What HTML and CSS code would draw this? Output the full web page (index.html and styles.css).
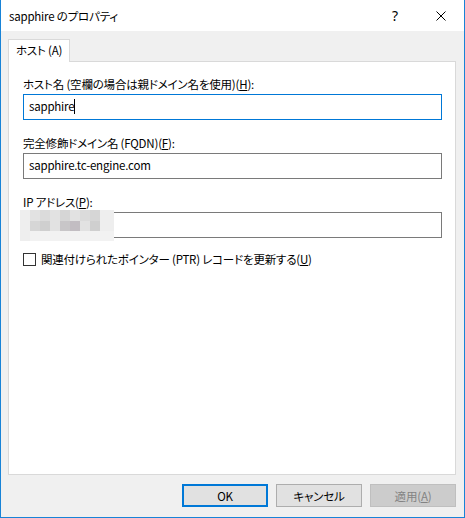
FILE: index.html
```html
<!DOCTYPE html>
<html lang="ja">
<head>
    <meta charset="UTF-8">
    <title>sapphire のプロパティ</title>
    <link rel="stylesheet" href="styles.css">
</head>
<body>
    <div class="window">
        <div class="titlebar">
            <span class="title">sapphire のプロパティ</span>
            <span class="caption-btn help">?</span>
            <span class="caption-btn close">
                <svg width="10" height="10" viewBox="0 0 10 10"><path d="M0.5 0.5 L9.5 9.5 M9.5 0.5 L0.5 9.5" stroke="#000" stroke-width="1" fill="none"/></svg>
            </span>
        </div>

        <div class="client">
            <div class="tabs">
                <div class="tab">ホスト (A)</div>
            </div>
            <div class="panel">
                <div class="field">
                    <label>ホスト名 (空欄の場合は親ドメイン名を使用)(<u>H</u>):</label>
                    <div class="textbox focused">sapphire<span class="caret"></span></div>
                </div>
                <div class="field">
                    <label>完全修飾ドメイン名 (FQDN)(<u>F</u>):</label>
                    <div class="textbox">sapphire.tc-engine.com</div>
                </div>
                <div class="field">
                    <label>IP アドレス(<u>P</u>):</label>
                    <div class="textbox ip">
                        <!-- masked address -->
                        <div class="mosaic">
                            <i class="c1"></i><i class="c2"></i><i class="c3"></i><i class="c2"></i><i class="c4"></i><i class="c2"></i><i class="c3"></i><i class="c4"></i><i class="c1"></i><i class="c1"></i>
                            <i class="c1"></i><i class="c4"></i><i class="c5"></i><i class="c2"></i><i class="c6"></i><i class="c7"></i><i class="c2"></i><i class="c5"></i><i class="c1"></i><i class="c1"></i>
                            <i class="c1"></i><i class="c0"></i><i class="c0"></i><i class="c0"></i><i class="c0"></i><i class="c0"></i><i class="c0"></i><i class="c0"></i><i class="c0"></i><i class="c0"></i>
                        </div>
                    </div>
                </div>
                <div class="check-row">
                    <span class="checkbox"></span>
                    <span>関連付けられたポインター (PTR) レコードを更新する(<u>U</u>)</span>
                </div>
            </div>

            <div class="buttons">
                <button class="default">OK</button>
                <button>キャンセル</button>
                <button disabled>適用(<u>A</u>)</button>
            </div>
        </div>
    </div>
</body>
</html>
```

FILE: styles.css
```css
body {
    margin: 0;
    font-family: "Noto Sans CJK JP", sans-serif;
    font-size: 11.5px;
    letter-spacing: -0.2px;
    font-feature-settings: "palt";
    color: #000;
}
.window {
    width: 465px;
    height: 518px;
    box-sizing: border-box;
    border: 1px solid #1883d7;
    border-top: none;
    display: flex;
    flex-direction: column;
    background: #f0f0f0;
}
.titlebar {
    height: 31px;
    background: #fff;
    display: flex;
    align-items: center;
    flex-shrink: 0;
}
.title {
    flex: 1;
    padding-left: 8px;
}
.caption-btn {
    width: 46px;
    height: 31px;
    display: flex;
    align-items: center;
    justify-content: center;
}
.help {
    font-family: "Noto Sans", sans-serif;
    font-size: 14px;
    letter-spacing: 0;
    padding-bottom: 1px;
}
.client {
    flex: 1;
    padding: 8px 8px 10px 7px;
    display: flex;
    flex-direction: column;
}
.tabs {
    display: flex;
}
.tab {
    position: relative;
    width: 60px;
    height: 22px;
    line-height: 20px;
    background: #fff;
    border: 1px solid #d9d9d9;
    border-bottom: none;
    text-align: center;
    margin-bottom: -1px;
    z-index: 1;
}
.panel {
    height: 414px;
    box-sizing: border-box;
    background: #fff;
    border: 1px solid #d9d9d9;
    padding: 14px 13px 0 14px;
}
.field {
    display: flex;
    flex-direction: column;
    margin-bottom: 15px;
}
.field label {
    line-height: 16px;
    margin-bottom: 2px;
}
.textbox {
    position: relative;
    height: 26px;
    box-sizing: border-box;
    border: 1px solid #7a7a7a;
    padding: 0 5px;
    line-height: 23px;
    background: #fff;
}
.textbox.focused {
    border-color: #0078d7;
}
.caret {
    display: inline-block;
    width: 1px;
    height: 15px;
    background: #000;
    vertical-align: -3px;
}
.mosaic {
    position: absolute;
    left: -4px;
    top: -3px;
    width: 94px;
    height: 31px;
    display: grid;
    grid-template-columns: repeat(9, 10px) 4px;
    grid-template-rows: 11px 10px 10px;
}
.c0 { background: #f2f2f2; }
.c1 { background: #eeeeee; }
.c2 { background: #e2e2e2; }
.c3 { background: #dbdbdb; }
.c4 { background: #d6d6d6; }
.c5 { background: #cfcfcf; }
.c6 { background: #c8c6c8; }
.c7 { background: #c2bdc2; }
.check-row {
    display: flex;
    align-items: center;
    line-height: 16px;
    margin-top: -2px;
}
.checkbox {
    width: 11px;
    height: 11px;
    border: 1px solid #333;
    margin-right: 5px;
}
.buttons {
    display: flex;
    justify-content: flex-end;
    gap: 8px;
    margin-top: 9px;
}
button {
    width: 86px;
    height: 23px;
    font-family: inherit;
    font-size: 11.5px;
    letter-spacing: -0.2px;
    font-feature-settings: "palt";
    color: #000;
    background: #e1e1e1;
    border: 1px solid #adadad;
    padding: 0;
}
button.default {
    border: 2px solid #0078d7;
}
button:disabled {
    background: #cccccc;
    border-color: #bfbfbf;
    color: #838383;
}
```
